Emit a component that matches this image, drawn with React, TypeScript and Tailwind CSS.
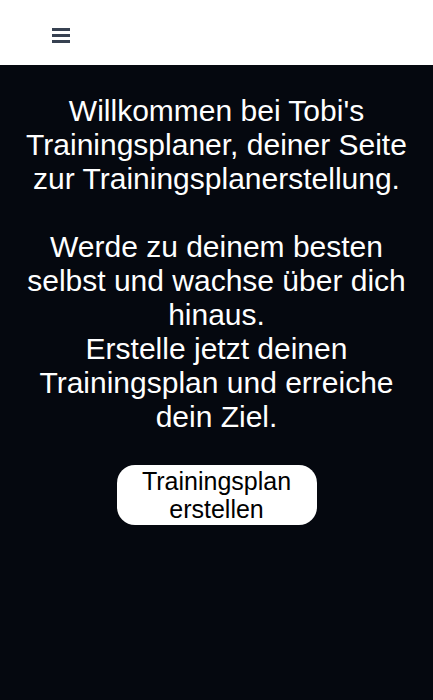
import React from "react";

export default function App() {
  return (
    <div className="min-h-[700px] bg-[#05080f] flex flex-col" style={{ fontFamily: '"Liberation Sans", Arial, sans-serif' }}>
      <header className="h-[65px] bg-white flex items-start pt-[28px] pl-[52px] shrink-0">
        <button className="flex flex-col gap-[3px] w-[18px]" aria-label="Menu">
          <span className="block h-[3px] w-[18px] bg-[#374151]" />
          <span className="block h-[3px] w-[18px] bg-[#374151]" />
          <span className="block h-[3px] w-[18px] bg-[#374151]" />
        </button>
      </header>
      <main className="flex flex-col items-center pt-[29px] px-4">
        <p className="text-white text-center text-[30px] leading-[34px]">
          Willkommen bei Tobi's Trainingsplaner, deiner Seite zur Trainingsplanerstellung.
          <br />
          <br />
          Werde zu deinem besten selbst und wachse über dich hinaus.
          <br />
          Erstelle jetzt deinen Trainingsplan und erreiche dein Ziel.
        </p>
        <button className="mt-[31px] w-[200px] h-[60px] bg-white rounded-[18px] text-black text-[25px] leading-[28px]">
          Trainingsplan erstellen
        </button>
      </main>
    </div>
  );
}
